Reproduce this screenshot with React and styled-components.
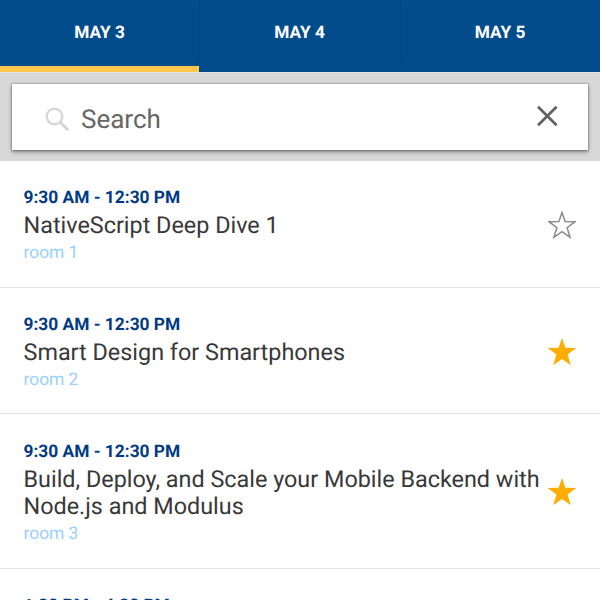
import React from 'react';
import styled, { createGlobalStyle } from 'styled-components';

const GlobalStyle = createGlobalStyle`
  *, *::before, *::after { box-sizing: border-box; }
  body {
    margin: 0;
    background: #fff;
    font-family: Roboto, "Liberation Sans", sans-serif;
    text-rendering: geometricPrecision;
  }
`;

const Screen = styled.div`
  display: flex;
  flex-direction: column;
  width: 600px;
  height: 600px;
  overflow: hidden;
  background: #fff;
`;

const Tabs = styled.nav`
  display: grid;
  grid-template-columns: 199px 201px 200px;
  flex: none;
  height: 72px;
  background: #024c8c;
`;

const Tab = styled.button`
  display: flex;
  align-items: center;
  justify-content: center;
  padding: 0;
  border: 0;
  border-bottom: 6px solid ${(p) => (p.$active ? '#ffc74b' : 'transparent')};
  background: linear-gradient(#04447f, #04447f) 0 2px / 1px 58px no-repeat;
  background-size: ${(p) => (p.$first ? '0 0' : '1px 58px')};
  color: #fff;
  font: 700 17.3px/20px Roboto, sans-serif;
  text-rendering: geometricPrecision;
`;

const SearchArea = styled.div`
  flex: none;
  height: 89px;
  padding: 12px 12px 0;
  background: #d8d8d8;
  border-top: 1px solid #e3e3e3;
`;

const SearchBox = styled.div`
  display: flex;
  align-items: center;
  height: 66px;
  padding: 4px 30px 0 33px;
  margin-top: -1px;
  background: #fff;
  box-shadow: 0 0 1px 1px rgba(0, 0, 0, 0.14), 0 2px 4px rgba(0, 0, 0, 0.42);
`;

const SearchLabel = styled.span`
  flex: 1;
  margin-left: 11px;
  padding-top: 2px;
  color: #666;
  font-size: 26px;
  line-height: 32px;
`;

const Icon = styled.svg`
  display: block;
  flex: none;
`;

const Session = styled.article`
  display: flex;
  flex: none;
  align-items: center;
  padding: 26.3px 24px 23.75px 23.5px;
  border-bottom: 1px solid #e2e2e2;
`;

const Details = styled.div`
  flex: 1;
  white-space: pre-line;
`;

const Time = styled.div`
  padding-top: 1px;
  color: #003a83;
  font-size: 17.35px;
  font-weight: 700;
  line-height: 20.5px;
`;

const Title = styled.div`
  margin: 3.5px 0 3.7px;
  color: #383838;
  font-size: 23.38px;
  line-height: 27.5px;
`;

const Room = styled.div`
  margin-bottom: -1px;
  color: #99cfff;
  font-size: 17.4px;
  line-height: 20.5px;
`;

const SearchIcon = () => (
  <Icon width="25" height="25" viewBox="0 0 25 25" fill="none" stroke="#d6d6d6">
    <circle cx="9.5" cy="9.5" r="7.8" strokeWidth="2.4" />
    <path d="M14.9 14.9L23.2 23.2" strokeWidth="3" />
  </Icon>
);

const CloseIcon = () => (
  <Icon width="22" height="28" viewBox="0 0 22 28" fill="none" stroke="#616161" strokeWidth="2.7">
    <path d="M2 1.7L20.6 20.3M20.6 1.7L2 20.3" />
  </Icon>
);

const STAR = 'M14 0L17.4 9.8L28.3 10L19.6 16.6L22.8 27.2L14 21L5.2 27.2L8.4 16.6L-0.3 10L10.6 9.8Z';
const STAR_OUTLINE = 'M14 1.5L17.1 10.5L27 10.7L19.1 16.7L22.1 26.3L14 20.7L5.9 26.3L8.9 16.7L1 10.7L10.9 10.5Z';

const Star = ({ filled }) => (
  <Icon width="28" height="28" viewBox="0 0 28 28">
    {filled ? (
      <path d={STAR} fill="#fdae00" />
    ) : (
      <path d={STAR_OUTLINE} fill="none" stroke="#8b8b8b" strokeWidth="1.5" />
    )}
  </Icon>
);

const days = ['MAY 3', 'MAY 4', 'MAY 5'];

const sessions = [
  { time: '9:30 AM - 12:30 PM', title: 'NativeScript Deep Dive 1', room: 'room 1', starred: false },
  { time: '9:30 AM - 12:30 PM', title: 'Smart Design for Smartphones', room: 'room 2', starred: true },
  { time: '9:30 AM - 12:30 PM', title: 'Build, Deploy, and Scale your Mobile Backend with\nNode.js and Modulus', room: 'room 3', starred: true },
  { time: '1:30 PM - 4:30 PM' },
];

export default function App() {
  return (
    <>
      <GlobalStyle />
      <Screen>
        <Tabs>
          {days.map((day, i) => (
            <Tab key={day} $active={i === 0} $first={i === 0}>{day}</Tab>
          ))}
        </Tabs>
        <SearchArea>
          <SearchBox>
            <SearchIcon />
            <SearchLabel>Search</SearchLabel>
            <CloseIcon />
          </SearchBox>
        </SearchArea>
        {sessions.map((s, i) => (
          <Session key={i}>
            <Details>
              <Time>{s.time}</Time>
              {s.title && <Title>{s.title}</Title>}
              {s.room && <Room>{s.room}</Room>}
            </Details>
            {s.title && <Star filled={s.starred} />}
          </Session>
        ))}
      </Screen>
    </>
  );
}
